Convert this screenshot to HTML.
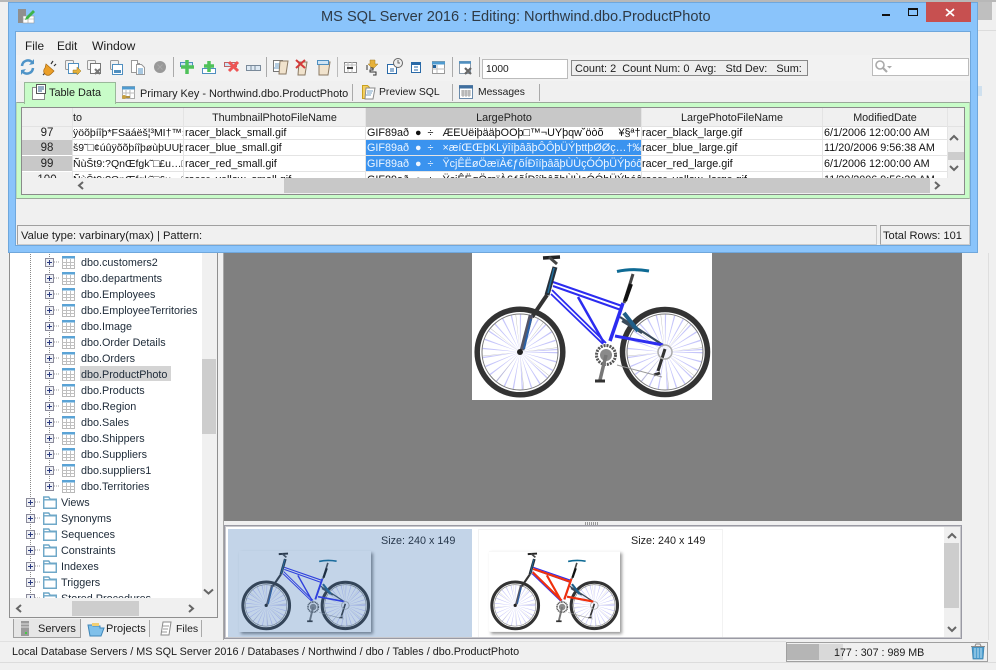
<!DOCTYPE html>
<html><head><meta charset="utf-8"><style>
html,body{margin:0;padding:0}
body{width:996px;height:670px;overflow:hidden;position:relative;background:#f0f0f0;font:11px "Liberation Sans",sans-serif;color:#1c1c1c}
div{position:absolute;box-sizing:border-box}
.t{white-space:nowrap;line-height:14px;height:14px}
.c{position:absolute;white-space:nowrap;overflow:hidden;line-height:15px;height:15px;font-size:10.8px;color:#111}
.h{text-align:center;color:#222}
.w{color:#eef6ff}
svg{position:absolute;left:0;top:0;overflow:visible}
.tr{font-size:10.8px;color:#1d2a38}
</style></head><body>
<svg width="0" height="0">
<defs>
<symbol id="tb" viewBox="0 0 13 13" width="13" height="13">
<rect x=".5" y=".5" width="12" height="12" fill="#fff" stroke="#b8b8b8"/><rect x="0" y="0" width="13" height="2.500" fill="#5aa3d6"/>
<path d="M4.500 3v10M8.500 3v10M0 6.500h13M0 9.500h13" stroke="#c0c0c0" fill="none"/></symbol>
<symbol id="fo" viewBox="0 0 14 13" width="14" height="13">
<path d="M.7 12.300V1h5l1.500 2.300h6.100v9z" fill="#fff" stroke="#6fa8c8" stroke-width="1.500"/><path d="M.5 3.800h13" stroke="#6fa8c8" stroke-width="1.400"/></symbol>
<symbol id="pb" viewBox="0 0 9 9" width="9" height="9">
<rect x=".5" y=".5" width="8" height="8" fill="#eef0f5" stroke="#8a8a9a"/><path d="M2 4.500h5M4.500 2v5" stroke="#2a3a80"/></symbol>
<symbol id="bike" viewBox="0 0 240 147">
<rect width="240" height="147" fill="#fff"/>
<g fill="none">
<circle cx="48" cy="99" r="19" stroke="#c6c6fa" stroke-width="37" stroke-dasharray=".7 4"/>
<circle cx="193" cy="99" r="19" stroke="#c6c6fa" stroke-width="37" stroke-dasharray=".7 4"/>
<circle cx="48" cy="99" r="19" stroke="#b8b8b8" stroke-width="37" stroke-dasharray=".25 14.600" stroke-dashoffset="2"/>
<circle cx="193" cy="99" r="19" stroke="#b8b8b8" stroke-width="37" stroke-dasharray=".25 14.600" stroke-dashoffset="2"/>
<circle cx="48" cy="99" r="42.800" stroke="#333" stroke-width="5.500"/>
<circle cx="193" cy="99" r="42.500" stroke="#333" stroke-width="5.500"/>
<circle cx="48" cy="99" r="38" stroke="#777" stroke-width="1"/>
<circle cx="193" cy="99" r="38" stroke="#777" stroke-width="1"/>
<path d="M148 64L191 92M150 68L170 80" stroke="#3a4a5a" stroke-width="2.200"/>
<path d="M152 60l14 18" stroke="#1f5f88" stroke-width="4"/>
<path d="M81 29L150 53M81 33L149 57" stroke="#2c2cf0" stroke-width="2"/>
<path d="M80 37L134 90M79 41L131 91" stroke="#2c2cf0" stroke-width="1.800"/>
<path d="M106 44L132 90" stroke="#2c2cf0" stroke-width="2.500"/>
<path d="M151 50L138 88" stroke="#2c2cf0" stroke-width="3.500"/>
<path d="M143 83L191 92" stroke="#2c2cf0" stroke-width="3"/>
<path d="M83 14L75 42" stroke="#26303a" stroke-width="5"/><path d="M82 15L76 40" stroke="#1f6f9f" stroke-width="1.500"/>
<path d="M75 42L60 64" stroke="#333" stroke-width="4"/>
<path d="M59 62L50 97" stroke="#556" stroke-width="4.500"/><path d="M59 66L52 96" stroke="#2a60a8" stroke-width="2"/>
<path d="M71 5L88 4" stroke="#222" stroke-width="3.500"/><path d="M77 4L85 11" stroke="#444" stroke-width="3"/>
<path d="M145 18.500Q160 15 177 18" stroke="#0e6a94" stroke-width="3"/>
<path d="M161 21L152 50" stroke="#444" stroke-width="3"/><path d="M159 31l-6 17" stroke="#111" stroke-width="4"/>
<circle cx="134" cy="102" r="6" fill="#8a8a8a"/><circle cx="134" cy="102" r="9.500" stroke="#555" stroke-width="3" stroke-dasharray="2 1"/>
<path d="M134 102L128 127" stroke="#777" stroke-width="3.500"/><path d="M123 128h10" stroke="#333" stroke-width="3"/>
<path d="M193 96L186 118M182 122l6-2" stroke="#333" stroke-width="3"/>
<path d="M145 112L190 124" stroke="#999" stroke-width="1"/>
<circle cx="193" cy="99" r="7" stroke="#aaa" stroke-width="1.500"/>
<circle cx="48" cy="99" r="3" fill="#222"/>
</g></symbol>
</defs></svg>

<!-- parent window background details -->
<div style="left:0;top:0;width:996px;height:2px;background:#b8b8b8"></div>
<div style="left:978px;top:2px;width:14px;height:18px;background:#bfbfbf"></div>
<div style="left:972px;top:30px;width:24px;height:1px;background:#dcdcdc"></div>
<div style="left:988px;top:253px;width:1px;height:387px;background:#dedede"></div>
<div style="left:978px;top:86px;width:4px;height:10px;background:#cfe0ee"></div>

<!-- left panel -->
<div style="left:9px;top:250px;width:209px;height:368px;background:#f0f0f0;border:1px solid #8f8f8f"></div>
<div id="tree" style="left:10px;top:250px;width:192px;height:348px;background:#fff;overflow:hidden">
<div class="t tr" style="left:71px;top:-9px;font-weight:bold">Production.Product</div>
<div class="t tr" style="left:71px;top:6px">dbo.customers2</div>
<div class="t tr" style="left:71px;top:22px">dbo.departments</div>
<div class="t tr" style="left:71px;top:38px">dbo.Employees</div>
<div class="t tr" style="left:71px;top:54px">dbo.EmployeeTerritories</div>
<div class="t tr" style="left:71px;top:70px">dbo.Image</div>
<div class="t tr" style="left:71px;top:86px">dbo.Order Details</div>
<div class="t tr" style="left:71px;top:102px">dbo.Orders</div>
<div style="left:70px;top:116px;width:91px;height:15px;background:#d4d4d4"></div>
<div class="t tr" style="left:71px;top:118px">dbo.ProductPhoto</div>
<div class="t tr" style="left:71px;top:134px">dbo.Products</div>
<div class="t tr" style="left:71px;top:150px">dbo.Region</div>
<div class="t tr" style="left:71px;top:166px">dbo.Sales</div>
<div class="t tr" style="left:71px;top:182px">dbo.Shippers</div>
<div class="t tr" style="left:71px;top:198px">dbo.Suppliers</div>
<div class="t tr" style="left:71px;top:214px">dbo.suppliers1</div>
<div class="t tr" style="left:71px;top:230px">dbo.Territories</div>
<div class="t tr" style="left:51px;top:246px">Views</div>
<div class="t tr" style="left:51px;top:262px">Synonyms</div>
<div class="t tr" style="left:51px;top:278px">Sequences</div>
<div class="t tr" style="left:51px;top:294px">Constraints</div>
<div class="t tr" style="left:51px;top:310px">Indexes</div>
<div class="t tr" style="left:51px;top:326px">Triggers</div>
<div class="t tr" style="left:51px;top:342px">Stored Procedures</div>
<svg width="192" height="348" style="left:0;top:0">
<g transform="translate(-10,-250)">
<path d="M30.500 250V598M49.500 250V486" stroke="#888" stroke-dasharray="1 1" fill="none"/>
<path d="M54 262h6M54 278h6M54 294h6M54 310h6M54 326h6M54 342h6M54 358h6M54 374h6M54 390h6M54 406h6M54 422h6M54 438h6M54 454h6M54 470h6M54 486h6M35 502h6M35 518h6M35 534h6M35 550h6M35 566h6M35 582h6M35 598h6" stroke="#999" stroke-dasharray="1 1" fill="none"/>
<use href="#pb" x="45" y="258"/><use href="#tb" x="62" y="256"/>
<use href="#pb" x="45" y="274"/><use href="#tb" x="62" y="272"/>
<use href="#pb" x="45" y="290"/><use href="#tb" x="62" y="288"/>
<use href="#pb" x="45" y="306"/><use href="#tb" x="62" y="304"/>
<use href="#pb" x="45" y="322"/><use href="#tb" x="62" y="320"/>
<use href="#pb" x="45" y="338"/><use href="#tb" x="62" y="336"/>
<use href="#pb" x="45" y="354"/><use href="#tb" x="62" y="352"/>
<use href="#pb" x="45" y="370"/><use href="#tb" x="62" y="368"/>
<use href="#pb" x="45" y="386"/><use href="#tb" x="62" y="384"/>
<use href="#pb" x="45" y="402"/><use href="#tb" x="62" y="400"/>
<use href="#pb" x="45" y="418"/><use href="#tb" x="62" y="416"/>
<use href="#pb" x="45" y="434"/><use href="#tb" x="62" y="432"/>
<use href="#pb" x="45" y="450"/><use href="#tb" x="62" y="448"/>
<use href="#pb" x="45" y="466"/><use href="#tb" x="62" y="464"/>
<use href="#pb" x="45" y="482"/><use href="#tb" x="62" y="480"/>
<use href="#pb" x="26" y="498"/><use href="#fo" x="43" y="496"/>
<use href="#pb" x="26" y="514"/><use href="#fo" x="43" y="512"/>
<use href="#pb" x="26" y="530"/><use href="#fo" x="43" y="528"/>
<use href="#pb" x="26" y="546"/><use href="#fo" x="43" y="544"/>
<use href="#pb" x="26" y="562"/><use href="#fo" x="43" y="560"/>
<use href="#pb" x="26" y="578"/><use href="#fo" x="43" y="576"/>
<use href="#pb" x="26" y="594"/><use href="#fo" x="43" y="592"/>
</g></svg>
</div>
<div style="left:202px;top:359px;width:14px;height:75px;background:#cdcdcd"></div>
<div style="left:72px;top:601px;width:67px;height:15px;background:#cdcdcd"></div>
<svg width="996" height="670" style="pointer-events:none">
<path d="M204 589.500l4.500 4 4.500-4" fill="none" stroke="#666" stroke-width="2"/>
<path d="M21 605l-4 3.500 4 3.500" fill="none" stroke="#666" stroke-width="2"/>
<path d="M189 605l4 3.500-4 3.500" fill="none" stroke="#666" stroke-width="2"/>
</svg>
<!-- left tabs -->
<div style="left:13px;top:619px;width:68px;height:19px;background:#e6e6e6;border:1px solid #a0a0a0;border-top:0"></div>
<div style="left:149px;top:620px;width:1px;height:17px;background:#aaa"></div>
<div style="left:201px;top:620px;width:1px;height:17px;background:#aaa"></div>
<div class="t" style="left:38px;top:622px">Servers</div>
<div class="t" style="left:106px;top:622px">Projects</div>
<div class="t" style="left:176px;top:622px;font-size:10.500px">Files</div>
<svg width="996" height="670">
<rect x="21" y="621" width="8" height="15" fill="#9a9a9a"/><path d="M21 624h8M21 627h8" stroke="#ddd"/><rect x="25" y="632" width="2" height="2" fill="#4c4"/>
<path d="M88 625h4l1 1h7v2h4l-3 8H90z" fill="#7fc0ea" stroke="#3f86b8"/><path d="M92 623h7v3h-7z" fill="#f2cf72"/>
<path d="M163 622h8l-2 13h-8z" fill="#fff" stroke="#8a8a8a"/><path d="M163 626h6M163 629h5M162 632h5" stroke="#9a9a9a"/>
</svg>

<!-- image panel -->
<div style="left:223px;top:250px;width:1px;height:390px;background:#a8a8a8"></div>
<div style="left:224px;top:250px;width:738px;height:271px;background:#808080"></div>
<svg style="left:472px;top:253px;filter:blur(.35px)" width="240" height="147" viewBox="0 0 240 147"><use href="#bike" width="240" height="147"/></svg>
<div style="left:585px;top:522px;width:14px;height:3px;background:repeating-linear-gradient(90deg,#999 0 1px,#f0f0f0 1px 2px)"></div>
<!-- thumbs -->
<div style="left:224px;top:525px;width:738px;height:114px;background:#fff;border:1px solid #9a9aa4;outline:1px solid #c8c8cc;outline-offset:-2px"></div>
<div style="left:478px;top:529px;width:245px;height:108px;background:#fff;border:1px solid #f2f2f2;border-bottom:0"></div>
<div class="t" style="left:631px;top:534px;font-size:10.800px">Size: 240 x 149</div>
<div style="left:489px;top:551px;width:131px;height:81px;background:#fff;box-shadow:2px 2px 3px #999;border:1px solid #eee"></div>
<svg style="left:489px;top:551px;color:red" width="131" height="81" viewBox="0 0 240 147">
<use href="#bike" width="240" height="147"/>
<path d="M81 32L150 56M80 38L133 90M106 44L132 90M151 50L138 88M143 83L191 92" stroke="#f0300c" stroke-width="4" fill="none"/></svg>
<div style="left:228px;top:529px;width:244px;height:108px;background:#fff"></div>
<div class="t" style="left:381px;top:534px;font-size:10.800px">Size: 240 x 149</div>
<div style="left:239px;top:551px;width:132px;height:81px;background:#fff;box-shadow:2px 2px 3px #888"></div>
<svg style="left:240px;top:551px" width="131" height="81" viewBox="0 0 240 147"><use href="#bike" width="240" height="147"/></svg>
<div style="left:228px;top:529px;width:244px;height:108px;background:rgba(55,112,178,.3)"></div>
<!-- thumbs scrollbar -->
<div style="left:944px;top:527px;width:16px;height:110px;background:#f0f0f0"></div>
<div style="left:944px;top:543px;width:15px;height:65px;background:#cdcdcd"></div>
<svg width="996" height="670"><path d="M948 538l4-4 4 4M948 627l4 4 4-4" fill="none" stroke="#666" stroke-width="2"/></svg>

<!-- status -->
<div style="left:0;top:641px;width:786px;height:1px;background:#e0e0e0"></div>
<div style="left:0;top:662px;width:996px;height:1px;background:#dcdcdc"></div>
<div class="t" style="left:12px;top:645px;font-size:10.800px">Local Database Servers / MS SQL Server 2016 / Databases / Northwind / dbo / Tables / dbo.ProductPhoto</div>
<div style="left:786px;top:642px;width:202px;height:20px;border:1px solid #a0a0a0"></div>
<div style="left:787px;top:644px;width:32px;height:16px;background:#b5b5b5"></div>
<div style="left:819px;top:644px;width:24px;height:16px;background:#d9d9d9"></div>
<div class="t" style="left:834px;top:646px;font-size:10.700px">177 : 307 : 989 MB</div>
<svg width="996" height="670">
<path d="M972 647h12l-1 12h-10z" fill="#4f9fd0" stroke="#3b80aa" stroke-width=".7"/>
<path d="M975 648v10M978 648v10M981 648v10" stroke="#bfe0f2"/>
<path d="M971 646.500h14M975 646l1-2h4l1 2" fill="none" stroke="#8a8a8a"/>
</svg>

<!-- DIALOG -->
<div style="left:8px;top:2px;width:970px;height:251px;background:#8ac4fb;border:1px solid #6fa7dc"></div>
<div style="left:15px;top:31px;width:956px;height:215px;background:#f0f0f0;border:1px solid #6fa7dc"></div>
<div class="t" style="left:321px;top:9px;font-size:14.600px;line-height:17px;height:17px;color:#2f3a45">MS SQL Server 2016 : Editing: Northwind.dbo.ProductPhoto</div>
<div style="left:926px;top:2px;width:45px;height:20px;background:#c75050"></div>
<svg width="996" height="670">
<path d="M946 9l8 7M954 9l-8 7" stroke="#fff" stroke-width="1.800"/>
<rect x="882" y="14" width="8" height="2" fill="#111"/>
<rect x="908.500" y="9.500" width="9" height="6" fill="none" stroke="#111"/><rect x="908" y="8" width="10" height="2" fill="#111"/>
<!-- title icon -->
<rect x="18" y="9" width="8" height="14" fill="#8f8f8f"/>
<rect x="23" y="16" width="11" height="7" fill="#fff" stroke="#999" stroke-width=".6"/><path d="M22 19h12M28 16v7" stroke="#999" stroke-width=".6"/>
<path d="M26 17l7-7 2 2-7 7-3 1z" fill="#3fb44a"/>
</svg>

<div class="t" style="left:25px;top:39px;font-size:11.800px">File</div>
<div class="t" style="left:57px;top:39px;font-size:11.800px">Edit</div>
<div class="t" style="left:92px;top:39px;font-size:12.200px">Window</div>

<div style="left:16px;top:55px;width:954px;height:26px;background:#f2f2f2"></div>
<div style="left:872px;top:58px;width:97px;height:18px;background:#fff;border:1px solid #bbb"></div>

<!-- toolbar icons -->
<svg width="996" height="670">
<g fill="none">
<path d="M22 66a6 6 0 0 1 10-4M33 68a6 6 0 0 1-10 4" stroke="#4f94c8" stroke-width="2.500"/><path d="M29 65l5-1v-5zM26 69l-5 1v5z" fill="#4f94c8"/>
<path d="M43 75l3-3M53 61l-2 3M56 64l-2 2" stroke="#333" stroke-width="1.200"/><path d="M46 64l8 7-3 3a4 4 0 0 1-6 0a4 4 0 0 1 0-6z" fill="#eb9f28" stroke="#a86a10" stroke-width=".7"/>
<rect x="65.500" y="60.500" width="8" height="9" stroke="#999" rx="1"/><rect x="68.500" y="63.500" width="10" height="10" fill="#fff" stroke="#4f8fc0"/><path d="M73 70h4v-3l4 4-4 4v-2h-4z" fill="#e6b13a" stroke="#a07a20" stroke-width=".5"/>
<rect x="87.500" y="60.500" width="8" height="9" stroke="#999" rx="1"/><rect x="90.500" y="63.500" width="10" height="10" fill="#fff" stroke="#777"/><path d="M95 69l5 5M100 69l-5 5" stroke="#777" stroke-width="2"/>
<rect x="110.500" y="60.500" width="8" height="9" stroke="#999" rx="1"/><rect x="112.500" y="64.500" width="10" height="10" fill="#fff" stroke="#4f8fc0"/><rect x="114" y="70" width="7" height="3" fill="#4f8fc0"/>
<path d="M131.500 60.500h6v3h2v9h-8z" fill="#fff" stroke="#999"/><path d="M136.500 64.500h5l3 3v7h-8z" fill="#fff" stroke="#999"/><path d="M138 69h5M138 71h5M138 73h5" stroke="#4f8fc0"/>
<circle cx="160" cy="67" r="6" fill="#999"/><path d="M157.500 64.500l5 5M162.500 64.500l-5 5" stroke="#aaa"/>
<path d="M173.500 57v20" stroke="#aaa"/>
<rect x="180.500" y="62.500" width="12" height="4" fill="#cfe4f4" stroke="#4f8fc0"/><path d="M187 60v14M181 67h13" stroke="#4fc15a" stroke-width="3.500"/>
<rect x="202.500" y="68.500" width="13" height="5" fill="#fff" stroke="#4f8fc0"/><path d="M209 61v11M204 66h10" stroke="#4fc15a" stroke-width="3.500"/>
<rect x="224.500" y="62.500" width="12" height="4" fill="#cfe4f4" stroke="#c06060"/><path d="M229 62l9 9M238 62l-9 9" stroke="#e55" stroke-width="3"/>
<rect x="246.500" y="65.500" width="14" height="5" fill="#dfeaf4" stroke="#7a8a9a"/><path d="M251 65v6M255 65v6" stroke="#7a8a9a"/>
<path d="M266.500 57v20" stroke="#aaa"/>
<rect x="273.500" y="60.500" width="9" height="11" fill="#fff" stroke="#777"/><path d="M275 64h6M275 66h6M274 68h6" stroke="#6a9ac0"/><path d="M280 61h8l-2 13h-7z" fill="#f1e3cd" stroke="#8a7a64"/>
<path d="M299 62h8l-2 13h-7z" fill="#f1e3cd" stroke="#8a7a64"/><path d="M296 60l9 8M305 60l-9 8" stroke="#d43a3a" stroke-width="2"/>
<path d="M319 62h11l-2 13h-9z" fill="#f1e3cd" stroke="#8a7a64"/><rect x="317.500" y="60.500" width="11" height="4" fill="#cfe4f4" stroke="#4f8fc0"/>
<path d="M337.500 57v20" stroke="#bbb"/>
<rect x="344.500" y="62.500" width="12" height="10" fill="#fff" stroke="#888"/><path d="M344 65h13M348 62v11M352 62v11" stroke="#bbb"/><rect x="347" y="67" width="6" height="2" fill="#444"/>
<path d="M370 60h5v4h3l-5 5-5-5h2z" fill="#e6b13a" stroke="#a07a20" stroke-width=".5"/>
<path d="M367 65v5M370 68h3v2h-3v2h3M373 72h3v3h-3" stroke="#333"/>
<rect x="387.500" y="64.500" width="9" height="9" fill="#fff" stroke="#2a6aa8"/><path d="M390 69h4M390 71h4" stroke="#2a6aa8"/><circle cx="398" cy="63" r="4.500" fill="#eee" stroke="#666"/><path d="M398 60v3h2" stroke="#666"/>
<rect x="411.500" y="62.500" width="9" height="10" fill="#fff" stroke="#2a6aa8"/><path d="M411 64h10" stroke="#2a6aa8" stroke-width="2"/><path d="M414 67h4M414 70h4" stroke="#2a6aa8"/>
<rect x="432.500" y="61.500" width="12" height="12" fill="#fff" stroke="#999"/><path d="M432 63h13" stroke="#4f9bd0" stroke-width="3"/><rect x="433" y="65" width="3" height="3" fill="#1f5f99"/><path d="M437 65v8M432 69h13" stroke="#bbb"/>
<path d="M452.500 57v20" stroke="#aaa"/>
<rect x="459.500" y="61.500" width="11" height="12" fill="#fff" stroke="#8a9aaa"/><path d="M459 62.500h12" stroke="#4f8fc0" stroke-width="2.500"/><path d="M465 68l6 6M471 68l-6 6" stroke="#666" stroke-width="2.200"/>
<path d="M479.500 57v20" stroke="#aaa"/>
<circle cx="880" cy="65" r="4" stroke="#aaa" stroke-width="1.600"/><path d="M883 68l4 4" stroke="#aaa" stroke-width="2.200"/><path d="M887 66h5l-2.500 2.500z" fill="#aaa"/>
</g></svg>
<div style="left:482px;top:59px;width:86px;height:20px;background:#fff;border:1px solid #bbb"></div>
<div class="t" style="left:486px;top:63px;font-size:10.200px">1000</div>
<div style="left:571px;top:60px;width:237px;height:16px;border:1px solid #888;background:#eee"></div>
<div class="t" style="left:575px;top:62px;font-size:10.900px;color:#1c1c1c">Count: 2&nbsp; Count Num: 0&nbsp; Avg:&nbsp;&nbsp; Std Dev:&nbsp;&nbsp; Sum:</div>

<!-- tabs -->
<div style="left:16px;top:102px;width:954px;height:97px;background:#c8fcc8;border:1px solid #9aa89a;border-left-color:#b8d8b8;border-right-color:#b8d8b8"></div>
<div style="left:24px;top:82px;width:92px;height:22px;background:#c8fcc8;border:1px solid #9ab89a;border-bottom:0"></div>
<div style="left:352px;top:84px;width:1px;height:17px;background:#aaa"></div>
<div style="left:452px;top:84px;width:1px;height:17px;background:#aaa"></div>
<div style="left:539px;top:84px;width:1px;height:17px;background:#aaa"></div>
<div class="t" style="left:49px;top:86px;font-size:10.900px">Table Data</div>
<div class="t" style="left:140px;top:87px;font-size:10.900px">Primary Key - Northwind.dbo.ProductPhoto</div>
<div class="t" style="left:379px;top:86px;font-size:10.400px">Preview SQL</div>
<div class="t" style="left:478px;top:86px;font-size:10.300px">Messages</div>
<svg width="996" height="670"><g fill="none">
<rect x="32.500" y="87.500" width="12" height="12" fill="#fff" stroke="#888"/><rect x="36.500" y="84.500" width="9" height="9" fill="#fff" stroke="#555"/><path d="M38 87h6M38 89h6M38 91h4" stroke="#2a5a88"/>
<rect x="122.500" y="86.500" width="12" height="12" fill="#fff" stroke="#aaa"/><path d="M122 88h13" stroke="#4f9bd0" stroke-width="3"/><path d="M126 90v9M130 90v9M122 93h13" stroke="#bbb"/><path d="M123 97h7" stroke="#b09040" stroke-width="2"/><circle cx="124" cy="97" r="2" fill="#c8a040"/>
<path d="M362.500 85.500h5l2 2v11h-7z" fill="#f5d060" stroke="#c8a020"/><path d="M366 88h9l-2 11h-8z" fill="#fff" stroke="#8a8a8a"/><path d="M367 91h6M367 93h5M366 95h5" stroke="#7aa0c0"/>
<rect x="459.500" y="85.500" width="13" height="13" fill="#fff" stroke="#6a8aaa"/><path d="M459 87h14" stroke="#3f6f9f" stroke-width="3"/><path d="M461 91h10M461 93h10M461 95h10M463 90v7M466 90v7M469 90v7" stroke="#888" stroke-width=".7"/>
</g></svg>

<!-- grid -->
<div id="grid" style="left:21px;top:107px;width:944px;height:88px;background:#fff;border:1px solid #8a8a8a;overflow:hidden">
<div style="left:0;top:0;width:942px;height:19px;background:#f0f0f0;border-bottom:1px solid #e2e2e2"></div>
<div style="left:344px;top:0;width:276px;height:19px;background:#c8c8c8"></div>
<div style="left:0;top:19px;width:50px;height:13px;background:#f0f0f0"></div>
<div style="left:0;top:32px;width:50px;height:15px;background:#c8c8c8"></div>
<div style="left:0;top:48px;width:50px;height:15px;background:#c8c8c8"></div>
<div style="left:0;top:64px;width:50px;height:6px;background:#f0f0f0"></div>
<div style="left:344px;top:32px;width:276px;height:15px;background:#3a93ef"></div>
<div style="left:344px;top:48px;width:276px;height:15px;background:#3a93ef"></div>
<div style="left:50px;top:31px;width:876px;height:1px;background:#e4e4e4"></div>
<div style="left:50px;top:47px;width:876px;height:1px;background:#e4e4e4"></div>
<div style="left:50px;top:63px;width:876px;height:1px;background:#e4e4e4"></div>
<div style="left:50px;top:0;width:1px;height:70px;background:#e4e4e4"></div>
<div style="left:161px;top:0;width:1px;height:70px;background:#e4e4e4"></div>
<div style="left:343px;top:0;width:1px;height:70px;background:#e4e4e4"></div>
<div style="left:619px;top:0;width:1px;height:70px;background:#e4e4e4"></div>
<div style="left:800px;top:0;width:1px;height:70px;background:#e4e4e4"></div>
<div style="left:925px;top:0;width:1px;height:70px;background:#e4e4e4"></div>

<div class="c h" style="left:51px;top:3px;width:110px;text-align:left">to</div>
<div class="c h" style="left:162px;top:3px;width:181px">ThumbnailPhotoFileName</div>
<div class="c h" style="left:344px;top:3px;width:276px">LargePhoto</div>
<div class="c h" style="left:620px;top:3px;width:180px">LargePhotoFileName</div>
<div class="c h" style="left:801px;top:3px;width:124px">ModifiedDate</div>

<div style="left:0;top:19px;width:926px;height:51px;overflow:hidden">
<div class="c h" style="left:0;top:-1px;width:50px;font-size:11.500px">97</div>
<div class="c h" style="left:0;top:14px;width:50px;font-size:11.500px">98</div>
<div class="c h" style="left:0;top:30px;width:50px;font-size:11.500px">99</div>
<div class="c h" style="left:0;top:46px;width:50px;font-size:11.500px">100</div>

<div class="c" style="left:51px;top:-1px;width:110px;font-size:10.500px">ÿöõþíîþ*FSäáëš¦³MI†™›:</div>
<div class="c" style="left:51px;top:14px;width:110px;font-size:10.500px">š9˜□¢úûÿõõþíîþøùþUUþ</div>
<div class="c" style="left:51px;top:30px;width:110px;font-size:10.500px">ÑùŠt9:?QnŒfgk˜□£u…□</div>
<div class="c" style="left:51px;top:46px;width:110px;font-size:10.500px">ÑùŠt9:?QnŒfgk˜□£u…□</div>

<div class="c" style="left:163px;top:-1px;width:180px">racer_black_small.gif</div>
<div class="c" style="left:163px;top:14px;width:180px">racer_blue_small.gif</div>
<div class="c" style="left:163px;top:30px;width:180px">racer_red_small.gif</div>
<div class="c" style="left:163px;top:46px;width:180px">racer_yellow_small.gif</div>

<div class="c" style="left:345px;top:-1px;width:274px">GIF89að&nbsp; ●&nbsp; ÷&nbsp;&nbsp; ÆEUëiþääþOOþ□™¬UYþqw˘öòõ&nbsp;&nbsp;&nbsp;&nbsp; ¥§ª††$</div>
<div class="c w" style="left:345px;top:14px;width:274px">GIF89að&nbsp; ●&nbsp; ÷&nbsp;&nbsp; ×æíŒŒþKLÿîíþâãþÔÔþÜÝþttþØØç…†‰òè</div>
<div class="c w" style="left:345px;top:30px;width:274px">GIF89að&nbsp; ●&nbsp; ÷&nbsp;&nbsp; ŸcjÊËøÖæïÀ€ƒõÍÐîíþâãþÙÙçÓÓþÜÝþóôõ</div>
<div class="c" style="left:345px;top:46px;width:274px">GIF89að&nbsp; ●&nbsp; ÷&nbsp;&nbsp; ŸcjÊËøÖæïÀ€ƒõÍÐîíþâãþÙÙçÓÓþÜÝþóôõ</div>

<div class="c" style="left:620px;top:-1px;width:180px">racer_black_large.gif</div>
<div class="c" style="left:620px;top:14px;width:180px">racer_blue_large.gif</div>
<div class="c" style="left:620px;top:30px;width:180px">racer_red_large.gif</div>
<div class="c" style="left:620px;top:46px;width:180px">racer_yellow_large.gif</div>

<div class="c" style="left:802px;top:-1px;width:123px">6/1/2006 12:00:00 AM</div>
<div class="c" style="left:802px;top:14px;width:123px">11/20/2006 9:56:38 AM</div>
<div class="c" style="left:802px;top:30px;width:123px">6/1/2006 12:00:00 AM</div>
<div class="c" style="left:802px;top:46px;width:123px">11/20/2006 9:56:38 AM</div>
</div>

<div style="left:0;top:70px;width:926px;height:16px;background:#f0f0f0"></div>
<div style="left:262px;top:70px;width:646px;height:15px;background:#c8c8c8"></div>
<div style="left:926px;top:19px;width:16px;height:67px;background:#f0f0f0"></div>
<div style="left:926px;top:44px;width:16px;height:8px;background:#cdcdcd"></div>
<svg width="944" height="88" style="left:0;top:0" ><path d="M61 74l-4 3.500 4 3.500M913 74l4 3.500-4 3.500M928 32l4-4 4 4M928 58l4 4 4-4" fill="none" stroke="#666" stroke-width="2"/></svg>
</div>

<!-- dialog status -->
<div style="left:17px;top:225px;width:860px;height:20px;border:1px solid #a0a0a0;border-right-color:#ccc;border-bottom-color:#ccc"></div>
<div style="left:880px;top:225px;width:90px;height:20px;border:1px solid #a0a0a0;border-right-color:#ccc;border-bottom-color:#ccc"></div>
<div class="t" style="left:21px;top:229px;font-size:11.200px">Value type: varbinary(max) | Pattern:</div>
<div class="t" style="left:883px;top:229px;font-size:11.100px">Total Rows: 101</div>
</body></html>
